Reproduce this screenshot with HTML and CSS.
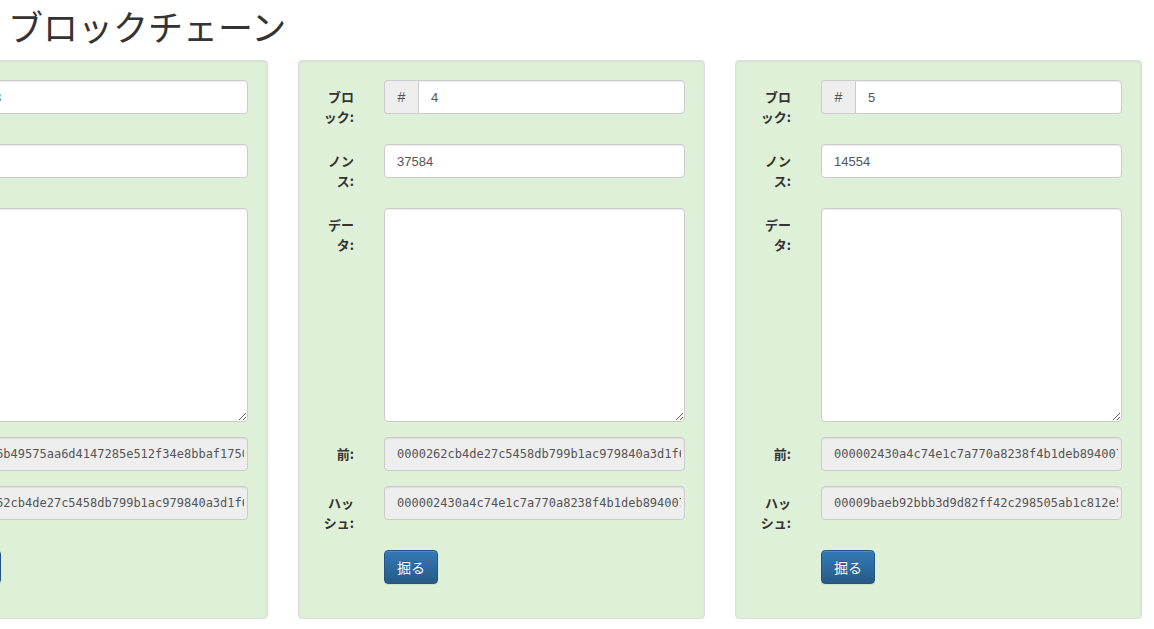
FILE: index.html
```html
<!DOCTYPE html>
<html lang="ja">
<head>
    <meta charset="UTF-8">
    <meta name="viewport" content="width=device-width, initial-scale=1.0">
    <title>ブロックチェーン</title>
    <link rel="stylesheet" href="styles.css">
</head>
<body>
    <h1 class="page-title">ブロックチェーン</h1>

    <div class="chain">
        <div class="chain-row">

            <!-- block 3 -->
            <div class="block-card">
                <div class="form-row">
                    <label class="form-label">ブロック:</label>
                    <div class="input-group">
                        <span class="input-addon">#</span>
                        <input class="form-control" type="number" value="3">
                    </div>
                </div>
                <div class="form-row">
                    <label class="form-label">ノンス:</label>
                    <input class="form-control" type="text" value="20189">
                </div>
                <div class="form-row">
                    <label class="form-label">データ:</label>
                    <textarea class="form-control data-area" rows="10"></textarea>
                </div>
                <div class="form-row">
                    <label class="form-label">前:</label>
                    <input class="form-control hash" type="text" readonly value="0000f6b49575aa6d4147285e512f34e8bbaf1750e2c9d4a8b3f61c07d5e9a2b4">
                </div>
                <div class="form-row">
                    <label class="form-label">ハッシュ:</label>
                    <input class="form-control hash" type="text" readonly value="0000262cb4de27c5458db799b1ac979840a3d1f6e8a21b7c93d05f4e6a1c2b8d">
                </div>
                <div class="form-row">
                    <span></span>
                    <div><button class="btn-mine">掘る</button></div>
                </div>
            </div>

            <!-- block 4 -->
            <div class="block-card">
                <div class="form-row">
                    <label class="form-label">ブロック:</label>
                    <div class="input-group">
                        <span class="input-addon">#</span>
                        <input class="form-control" type="number" value="4">
                    </div>
                </div>
                <div class="form-row">
                    <label class="form-label">ノンス:</label>
                    <input class="form-control" type="text" value="37584">
                </div>
                <div class="form-row">
                    <label class="form-label">データ:</label>
                    <textarea class="form-control data-area" rows="10"></textarea>
                </div>
                <div class="form-row">
                    <label class="form-label">前:</label>
                    <input class="form-control hash" type="text" readonly value="0000262cb4de27c5458db799b1ac979840a3d1f6e8a21b7c93d05f4e6a1c2b8d">
                </div>
                <div class="form-row">
                    <label class="form-label">ハッシュ:</label>
                    <input class="form-control hash" type="text" readonly value="000002430a4c74e1c7a770a8238f4b1deb894007c2d6e1f39a5b8c0d47e2f613">
                </div>
                <div class="form-row">
                    <span></span>
                    <div><button class="btn-mine">掘る</button></div>
                </div>
            </div>

            <!-- block 5 -->
            <div class="block-card">
                <div class="form-row">
                    <label class="form-label">ブロック:</label>
                    <div class="input-group">
                        <span class="input-addon">#</span>
                        <input class="form-control" type="number" value="5">
                    </div>
                </div>
                <div class="form-row">
                    <label class="form-label">ノンス:</label>
                    <input class="form-control" type="text" value="14554">
                </div>
                <div class="form-row">
                    <label class="form-label">データ:</label>
                    <textarea class="form-control data-area" rows="10"></textarea>
                </div>
                <div class="form-row">
                    <label class="form-label">前:</label>
                    <input class="form-control hash" type="text" readonly value="000002430a4c74e1c7a770a8238f4b1deb894007c2d6e1f39a5b8c0d47e2f613">
                </div>
                <div class="form-row">
                    <label class="form-label">ハッシュ:</label>
                    <input class="form-control hash" type="text" readonly value="00009baeb92bbb3d9d82ff42c298505ab1c812e5f0a7d3b96c41e28d7f5a0c39">
                </div>
                <div class="form-row">
                    <span></span>
                    <div><button class="btn-mine">掘る</button></div>
                </div>
            </div>

        </div>
    </div>
</body>
</html>
```

FILE: styles.css
```css
body {
    margin: 0;
    font-family: "Liberation Sans", "Noto Sans CJK JP", sans-serif;
    font-size: 14px;
    line-height: 20px;
    color: #333;
    background: #fff;
    overflow: hidden;
}
.page-title {
    margin: 6px 0 14px;
    padding-left: 8px;
    font-family: "Noto Sans CJK JP", sans-serif;
    font-size: 35px;
    font-weight: 400;
    line-height: 40px;
    color: #333;
}
.chain {
    overflow: hidden;
}
.chain-row {
    display: flex;
    gap: 30px;
    margin-left: -139px;
}
.block-card {
    flex: 0 0 407px;
    box-sizing: border-box;
    padding: 19px;
    background: #dff0d8;
    border: 1px solid #dcdcdc;
    border-radius: 4px;
    box-shadow: inset 0 1px 3px rgba(0,0,0,0.05), 0 1px 0 rgba(255,255,255,0.1);
}
.form-row {
    display: grid;
    grid-template-columns: 36px 1fr;
    column-gap: 30px;
    align-items: start;
    margin-bottom: 15px;
}
.form-label {
    padding: 7px 0 2px;
    text-align: right;
    font-family: "Noto Sans CJK JP", sans-serif;
    font-size: 13px;
    font-weight: 700;
    line-height: 20px;
    color: #333;
}
.form-control {
    display: block;
    width: 100%;
    height: 34px;
    box-sizing: border-box;
    margin: 0;
    padding: 6px 12px;
    font-family: "Liberation Sans", "Noto Sans CJK JP", sans-serif;
    font-size: 13px;
    line-height: 20px;
    color: #555;
    background: #fff;
    border: 1px solid #ccc;
    border-radius: 4px;
    box-shadow: inset 0 1px 1px rgba(0,0,0,0.075);
    outline: none;
}
.form-control[readonly] {
    background: #eee;
}
.form-control::-webkit-inner-spin-button,
.form-control::-webkit-outer-spin-button {
    -webkit-appearance: none;
    margin: 0;
}
.hash {
    padding-right: 3px;
    font-family: "DejaVu Sans Mono", monospace;
    font-size: 12px;
}
.data-area {
    height: 214px;
    resize: vertical;
}
.input-group {
    display: flex;
}
.input-addon {
    flex: 0 0 34px;
    box-sizing: border-box;
    height: 34px;
    padding: 6px 0;
    text-align: center;
    font-size: 14px;
    line-height: 20px;
    color: #555;
    background: #eee;
    border: 1px solid #ccc;
    border-right: 0;
    border-radius: 4px 0 0 4px;
}
.input-group .form-control {
    border-radius: 0 4px 4px 0;
}
.btn-mine {
    height: 34px;
    padding: 6px 12px;
    font-family: "Noto Sans CJK JP", sans-serif;
    font-size: 14px;
    line-height: 20px;
    color: #fff;
    background: linear-gradient(to bottom, #337ab7 0, #265a88 100%);
    border: 1px solid #245580;
    border-radius: 4px;
    text-shadow: 0 -1px 0 rgba(0,0,0,0.2);
    box-shadow: inset 0 1px 0 rgba(255,255,255,0.15), 0 1px 1px rgba(0,0,0,0.075);
    cursor: pointer;
}
```
